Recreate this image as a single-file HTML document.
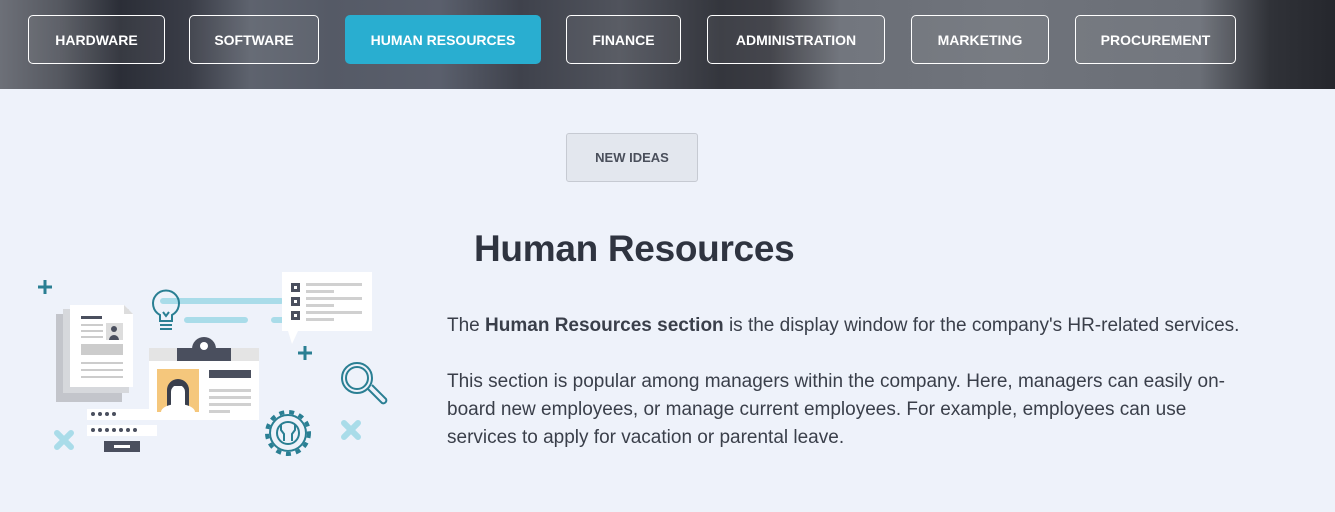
<!DOCTYPE html>
<html><head><meta charset="utf-8"><style>
*{margin:0;padding:0;box-sizing:border-box}
body{width:1335px;height:512px;overflow:hidden;background:#eef2fa;font-family:"Liberation Sans",sans-serif;position:relative}
.hdr{position:absolute;left:0;top:0;width:1335px;height:89px;background:linear-gradient(90deg,#6d7078 0px,#555860 60px,#2b2e37 120px,#3a3d47 190px,#5e636e 250px,#555a66 330px,#5a5f6c 440px,#3f424c 520px,#50535c 620px,#34363d 720px,#3a3b42 770px,#6a6e76 840px,#70747c 1000px,#6a6e76 1200px,#303238 1270px,#25272d 1335px)}
.b{position:absolute;top:15px;height:49px;border:1.5px solid #fff;border-radius:5px;color:#fff;font-weight:bold;font-size:14px;display:flex;align-items:center;justify-content:center;background:rgba(255,255,255,0.06)}
.b.on{background:#29aed0;border-color:#29aed0}
.ni{position:absolute;left:566px;top:133px;width:132px;height:49px;background:#e3e7ee;border:1px solid #c6cad2;border-radius:3px;color:#4a4f5b;font-weight:bold;font-size:13px;display:flex;align-items:center;justify-content:center}
h1{position:absolute;left:474px;top:228px;font-size:37px;color:#2f3440;font-weight:bold;letter-spacing:-0.3px}
.p{position:absolute;left:447px;font-size:19px;line-height:28px;color:#3a3f4a;width:880px;white-space:nowrap}
</style></head><body>
<div class="hdr"></div>
<div class="b" style="left:28px;width:137px">HARDWARE</div>
<div class="b" style="left:189px;width:130px">SOFTWARE</div>
<div class="b on" style="left:345px;width:196px">HUMAN RESOURCES</div>
<div class="b" style="left:566px;width:115px">FINANCE</div>
<div class="b" style="left:707px;width:178px">ADMINISTRATION</div>
<div class="b" style="left:911px;width:138px">MARKETING</div>
<div class="b" style="left:1075px;width:161px">PROCUREMENT</div>
<div class="ni">NEW IDEAS</div>
<h1>Human Resources</h1>
<div class="p" style="top:312px">The <b>Human Resources section</b> is the display window for the company's HR-related services.</div>
<div class="p" style="top:368px">This section is popular among managers within the company. Here, managers can easily on-<br>board new employees, or manage current employees. For example, employees can use<br>services to apply for vacation or parental leave.</div>
<svg style="position:absolute;left:0;top:0" width="400" height="512">
<g stroke="#2a7f93" stroke-width="3" fill="none">
<path d="M45 280v14M38 287h14M305 346v14M298 353h14"/>
</g>
<g stroke="#a9dce9" stroke-width="6" stroke-linecap="round">
<path d="M57 433l14 14M71 433l-14 14M344 423l14 14M358 423l-14 14"/>
<path d="M163 301h118M187 320h58M274 320h9"/>
</g>
<rect x="56" y="314" width="66" height="88" fill="#c3c5cb"/>
<rect x="63" y="309" width="66" height="84" fill="#d6d8dc"/>
<path d="M70 305h54l9 9v73h-63z" fill="#fff"/>
<path d="M124 305v9h9z" fill="#ddd"/>
<rect x="81" y="316" width="21" height="3" fill="#4a4f5e"/>
<g fill="#ccc"><rect x="81" y="324" width="22" height="2"/><rect x="81" y="330" width="22" height="2"/><rect x="81" y="336" width="22" height="2"/><rect x="81" y="344" width="42" height="11"/><rect x="81" y="362" width="42" height="2"/><rect x="81" y="369" width="42" height="2"/><rect x="81" y="376" width="42" height="2"/></g>
<rect x="106" y="323" width="17" height="17" fill="#ddd"/><circle cx="114" cy="329" r="3" fill="#4a4f5e"/><path d="M109 340a5 5 0 0 1 10 0z" fill="#4a4f5e"/>
<g stroke="#2a7f93" stroke-width="2" fill="none"><path d="M160 321v-6a13 13 0 1 1 12 0v6zM160 325h12M160 329h12M163 312l3 4 3-4"/></g>
<path d="M282 272h90v59h-74l-6 13-4-13h-6z" fill="#fff"/>
<g fill="#4a4f5e"><rect x="291" y="283" width="9" height="9"/><rect x="291" y="297" width="9" height="9"/><rect x="291" y="311" width="9" height="9"/></g>
<g fill="#fff"><rect x="294" y="286" width="3" height="3"/><rect x="294" y="300" width="3" height="3"/><rect x="294" y="314" width="3" height="3"/></g>
<g fill="#d0d0d0"><rect x="306" y="283" width="56" height="3"/><rect x="306" y="290" width="28" height="3"/><rect x="306" y="297" width="56" height="3"/><rect x="306" y="304" width="28" height="3"/><rect x="306" y="311" width="56" height="3"/><rect x="306" y="318" width="28" height="3"/></g>
<rect x="149" y="348" width="110" height="72" fill="#fff"/>
<rect x="149" y="348" width="110" height="13" fill="#e4e4e4"/>
<rect x="177" y="348" width="54" height="13" fill="#4a4f5e"/>
<path d="M192 349a12 12 0 0 1 24 0z" fill="#4a4f5e"/><circle cx="204" cy="346" r="4" fill="#fff"/>
<rect x="157" y="369" width="42" height="43" fill="#f5c77c"/>
<path d="M167 412v-22a11 11 0 0 1 22 0v22z" fill="#3a3f4c"/>
<path d="M161 412a17 8 0 0 1 34 0z" fill="#fff"/><path d="M171 412v-20a7 7 0 0 1 14 0v20z" fill="#fff"/>
<path d="M167 392a11 11 0 0 1 22 0l-4 -6h-14z" fill="#3a3f4c"/>
<rect x="209" y="370" width="42" height="8" fill="#4a4f5e"/>
<g fill="#d0d0d0"><rect x="209" y="389" width="42" height="3"/><rect x="209" y="396" width="42" height="3"/><rect x="209" y="403" width="42" height="3"/><rect x="209" y="410" width="21" height="3"/></g>
<rect x="87" y="409" width="66" height="11" fill="#fff"/>
<rect x="87" y="425" width="70" height="11" fill="#fff"/>
<g fill="#4a4f5e"><circle cx="93" cy="414" r="2"/><circle cx="100" cy="414" r="2"/><circle cx="107" cy="414" r="2"/><circle cx="114" cy="414" r="2"/>
<circle cx="93" cy="430" r="2"/><circle cx="100" cy="430" r="2"/><circle cx="107" cy="430" r="2"/><circle cx="114" cy="430" r="2"/><circle cx="121" cy="430" r="2"/><circle cx="128" cy="430" r="2"/><circle cx="135" cy="430" r="2"/></g>
<rect x="104" y="441" width="36" height="11" fill="#4a4f5e"/><rect x="114" y="445" width="16" height="3" fill="#fff"/>
<g stroke="#2a7f93" stroke-width="2" fill="none">
<circle cx="288" cy="433" r="21" stroke-dasharray="5 5" stroke-width="4"/>
<circle cx="288" cy="433" r="18"/>
<circle cx="288" cy="433" r="11"/>
<path d="M284 441v-7l-3-4v-5M292 441v-7l3-4v-5"/>
<circle cx="357" cy="378" r="15"/><circle cx="357" cy="378" r="11"/>
<path d="M368 389l14 14a3 3 0 0 0 4-4l-14-14"/>
</g>
</svg>
</body></html>
